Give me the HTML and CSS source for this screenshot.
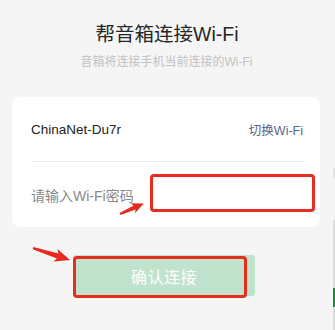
FILE: index.html
```html
<!DOCTYPE html>
<html lang="zh-CN">
<head>
<meta charset="utf-8">
<link rel="stylesheet" href="styles.css">
</head>
<body>
<div class="page">
  <div class="header">
    <div class="title">帮音箱连接Wi-Fi</div>
    <div class="subtitle">音箱将连接手机当前连接的Wi-Fi</div>
  </div>
  <div class="card">
    <div class="row row-ssid">
      <span class="ssid">ChinaNet-Du7r</span>
      <span class="switch">切换Wi-Fi</span>
    </div>
    <div class="divider"></div>
    <div class="row row-pwd">
      <span class="pwd-label">请输入Wi-Fi密码</span>
    </div>
  </div>
  <div class="btn-wrap">
    <div class="btn">确认连接</div>
  </div>

  <div class="mark mark-input"></div>
  <div class="mark mark-btn"></div>
  <svg class="arrows" width="335" height="330" viewBox="0 0 335 330">
    <polygon transform="translate(120,214) rotate(-24)" points="0,-1 16,-2.2 14,-5.5 26,0 14,5.5 16,2.2 0,1.2" fill="#e8291f"/>
    <polygon transform="translate(33,248) rotate(18)" points="0,-1 26,-2.6 23.5,-6.5 39,0 23.5,6.5 26,2.6 0,1.2" fill="#e8291f"/>
  </svg>
  <div class="edge">
    <div class="edge-glyph"></div>
    <div class="edge-line"><div class="edge-green"></div></div>
  </div>
</div>
</body>
</html>
```
FILE: styles.css
```css
html, body {
  margin: 0;
  padding: 0;
  background: #f5f5f5;
}
.page {
  position: relative;
  width: 335px;
  height: 330px;
  overflow: hidden;
  font-family: "Liberation Sans", "Noto Sans CJK SC", sans-serif;
}
.header {
  padding-top: 20px;
  display: flex;
  flex-direction: column;
  align-items: center;
}
.title {
  font-size: 19.5px;
  line-height: 28px;
  color: #262626;
  margin-right: 1px;
}
.subtitle {
  margin-top: 4px;
  font-size: 12px;
  line-height: 20px;
  color: #c2c2c2;
  margin-right: 2px;
}
.card {
  margin: 25px 15px 0 12px;
  background: #ffffff;
  border-radius: 8px;
  padding: 0 15px 0 19px;
}
.row {
  display: flex;
  align-items: center;
  justify-content: space-between;
}
.row-ssid {
  height: 64px;
}
.row-pwd {
  height: 65px;
}
.ssid {
  font-size: 13.5px;
  color: #222222;
}
.switch {
  font-size: 12.5px;
  color: #56658a;
  margin-right: 2px;
}
.divider {
  height: 1px;
  background: #ededed;
}
.pwd-label {
  font-size: 14px;
  color: #8a8a8a;
}
.btn-wrap {
  margin-top: 28px;
  padding-left: 73px;
}
.btn {
  width: 182px;
  height: 41px;
  background: #bfe3cc;
  border-radius: 3px;
  color: #ffffff;
  font-size: 16px;
  display: flex;
  align-items: center;
  justify-content: center;
  letter-spacing: 0.5px;
}
.mark {
  position: absolute;
  box-sizing: border-box;
  border: 3px solid #e52e20;
  border-radius: 4px;
}
.mark-input {
  left: 150px;
  top: 174px;
  width: 165px;
  height: 38px;
}
.mark-btn {
  left: 73px;
  top: 256px;
  width: 174px;
  height: 42px;
}
.arrows {
  position: absolute;
  left: 0;
  top: 0;
}
.edge {
  position: absolute;
  left: 333px;
  top: 168px;
  width: 2px;
  height: 162px;
}
.edge-glyph {
  height: 10px;
  background: #e2e2e2;
  width: 2px;
}
.edge-line {
  margin-top: 42px;
  height: 110px;
  background: #dcdcdc;
  padding-top: 68px;
  box-sizing: border-box;
}
.edge-green {
  height: 19px;
  background: #1c8a3c;
}
```
